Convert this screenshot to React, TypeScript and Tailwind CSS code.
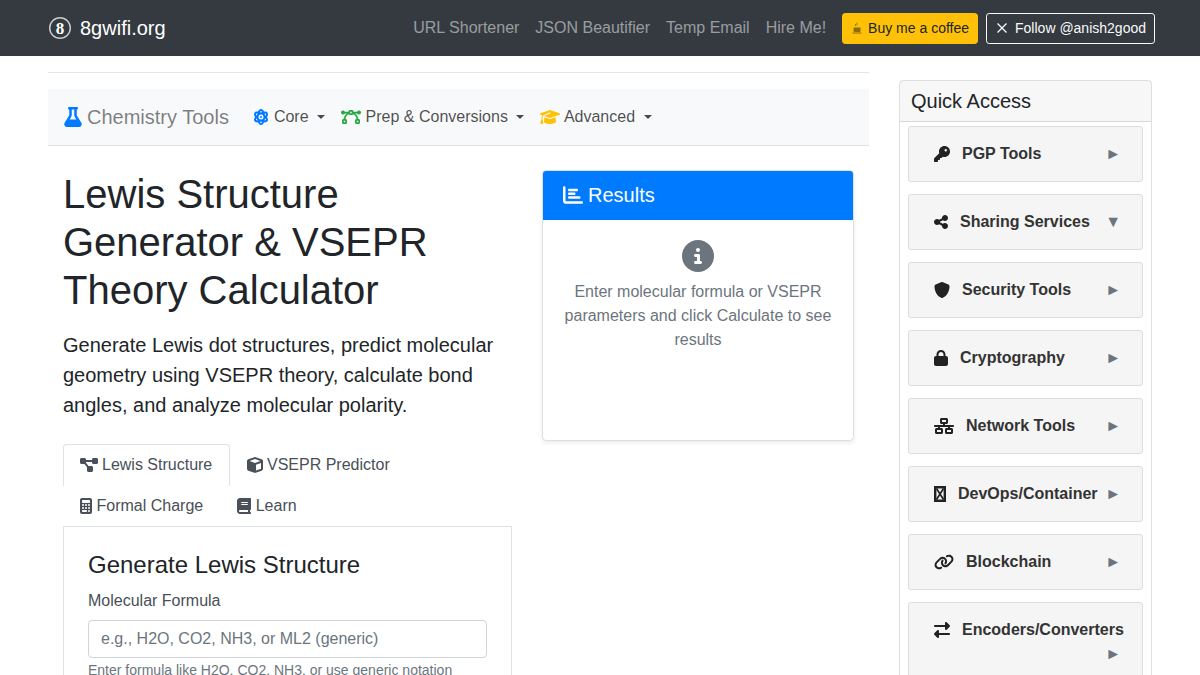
import React from "react";
import {
  FaFlask, FaAtom, FaBezierCurve, FaGraduationCap, FaDiagramProject, FaCube, FaCalculator, FaBook,
  FaChartBar, FaCircleInfo, FaKey, FaShareNodes, FaShield, FaLock, FaNetworkWired, FaLink, FaRightLeft,
} from "react-icons/fa6";

function BoxHourglass() {
  return (
    <svg viewBox="0 0 12 16" className="w-3 h-4">
      <path d="M1.2 1.3h9.6v13.4H1.2z" fill="none" stroke="currentColor" strokeWidth="2.4" />
      <path d="M2.5 2.5l7 11M9.5 2.5l-7 11" stroke="currentColor" strokeWidth="1.7" />
    </svg>
  );
}

const sidebar: { label: string; icon: React.ReactNode; arrow?: string; wrap?: boolean }[] = [
  { label: "PGP Tools", icon: <FaKey /> },
  { label: "Sharing Services", icon: <FaShareNodes className="w-[14px]" />, arrow: "▼" },
  { label: "Security Tools", icon: <FaShield /> },
  { label: "Cryptography", icon: <FaLock className="w-[14px]" /> },
  { label: "Network Tools", icon: <FaNetworkWired className="w-5" /> },
  { label: "DevOps/Container", icon: <BoxHourglass /> },
  { label: "Blockchain", icon: <FaLink className="w-5" /> },
  { label: "Encoders/Converters", icon: <FaRightLeft />, wrap: true },
];

function Caret() {
  return <span className="inline-block ml-[8px] w-0 h-0 border-t-[4.8px] border-t-current border-x-[4.8px] border-x-transparent" />;
}

export default function App() {
  return (
    <div className="h-[675px] overflow-hidden bg-white text-[#212529] text-base font-['Liberation_Sans',Arial,sans-serif]">
      <nav className="h-14 bg-[#343a40] flex items-center pl-12 pr-[45px]">
        <svg viewBox="0 0 24 24" className="w-6 h-6 mr-[8px] shrink-0">
          <circle cx="12" cy="12" r="10.3" fill="none" stroke="#c9cacc" strokeWidth="1.5" />
          <text x="12" y="18" textAnchor="middle" fontSize="17" fontWeight="700" fill="#fff" fontFamily="'Liberation Serif',serif">8</text>
        </svg>
        <span className="text-[20px] text-white">8gwifi.org</span>
        <div className="ml-auto flex items-center">
          <a className="text-[rgba(255,255,255,0.5)] px-2">URL Shortener</a>
          <a className="text-[rgba(255,255,255,0.5)] px-2">JSON Beautifier</a>
          <a className="text-[rgba(255,255,255,0.5)] px-2">Temp Email</a>
          <a className="text-[rgba(255,255,255,0.5)] px-2">Hire Me!</a>
          <a className="ml-2 h-[31px] flex items-center px-2 rounded-[3.2px] bg-[#ffc107] border border-[#ffc107] text-[14px] text-[#212529] whitespace-nowrap">
            <svg viewBox="0 0 12 12" className="w-3 h-3 mr-[5px]">
              <path d="M6 0.5v3M4.5 2v2" stroke="#8a6d10" strokeWidth="0.8" fill="none" />
              <path d="M2.5 5.5h7v3.5a1 1 0 0 1-1 1h-5a1 1 0 0 1-1-1z" fill="#8a6d10" />
              <path d="M1.5 11h9" stroke="#8a6d10" strokeWidth="1" />
            </svg>
            Buy me a coffee
          </a>
          <a className="ml-2 h-[31px] flex items-center px-2 rounded-[3.2px] border border-[#f8f9fa] text-[14px] text-[#f8f9fa] whitespace-nowrap">
            <svg viewBox="0 0 14 14" className="w-[14px] h-[14px] mr-[6px]"><path d="M2.5 2.5l9 9M11.5 2.5l-9 9" stroke="#f8f9fa" strokeWidth="1.3" /></svg>
            Follow @anish2good
          </a>
        </div>
      </nav>

      <div className="flex px-12 items-start">
        <main className="w-[821px] shrink-0">
          <hr className="mt-4 mb-4 border-t border-[#e5e5e5]" />
          <div className="h-[57px] bg-[#f8f9fa] border-b border-[#dee2e6] flex items-center pl-4">
            <FaFlask className="w-[18px] h-5 text-[#007bff]" />
            <span className="ml-[5px] text-[20px] leading-[30px] text-[rgba(0,0,0,0.5)] -mt-px">Chemistry Tools</span>
            <div className="flex items-center text-[rgba(0,0,0,0.7)] ml-6 -mt-[1px]">
              <span className="pr-4 flex items-center"><FaAtom className="w-4 h-4 text-[#007bff] mr-[5px]" />Core<Caret /></span>
              <span className="pr-4 flex items-center"><FaBezierCurve className="w-5 h-4 text-[#28a745] mr-[5px]" />Prep &amp; Conversions<Caret /></span>
              <span className="flex items-center"><FaGraduationCap className="w-5 h-4 text-[#ffc107] mr-[4px]" />Advanced<span className="ml-px flex items-center"><Caret /></span></span>
            </div>
          </div>
          <div className="flex px-[15px] mt-6 gap-[30px] items-start">
            <section className="w-[449px] shrink-0">
              <h1 className="text-[40px] leading-[48px] font-normal">Lewis Structure Generator &amp; VSEPR Theory Calculator</h1>
              <p className="mt-[16px] text-[20px] leading-[30px] font-light">Generate Lewis dot structures, predict molecular geometry using VSEPR theory, calculate bond angles, and analyze molecular polarity.</p>
              <div className="mt-[24px] text-[#495057]">
                <div className="flex h-[41px]">
                  <div className="w-[167px] h-[42px] pl-[16px] pb-[2px] flex items-center border border-b-0 border-[#dee2e6] rounded-t-[4px] bg-white z-10">
                    <FaDiagramProject className="w-[18px] h-4 mr-[4px] shrink-0" />Lewis Structure
                  </div>
                  <div className="pl-[17px] flex items-center"><FaCube className="w-4 h-4 mr-[4px]" />VSEPR Predictor</div>
                </div>
                <div className="flex h-[41px] items-center pl-[17px]">
                  <FaCalculator className="w-3 h-4 mr-[4.5px]" />Formal Charge
                  <FaBook className="w-[14px] h-4 ml-[34px] mr-[4.5px]" />Learn
                </div>
                <div className="border border-[#dee2e6] px-6 pt-6 pb-6">
                  <h4 className="text-[24px] leading-[28px] text-[#212529]">Generate Lewis Structure</h4>
                  <label className="block mt-[10px] leading-6">Molecular Formula</label>
                  <input readOnly placeholder="e.g., H2O, CO2, NH3, or ML2 (generic)" className="mt-[7px] w-full h-[38px] px-3 border border-[#ced4da] rounded-[4px] placeholder:text-[#6c757d] outline-none" />
                  <p className="mt-[2px] text-[14px] leading-[21px] text-[#6c757d]">Enter formula like H2O, CO2, NH3, or use generic notation</p>
                </div>
              </div>
            </section>
            <aside className="w-[312px] h-[270.5px] shrink-0 border border-[rgba(0,0,0,0.125)] rounded-[4px] shadow-[0_2px_4px_rgba(0,0,0,0.075)] overflow-hidden">
              <div className="h-[49px] bg-[#007bff] text-white flex items-center pl-5 pb-[1px] text-[20px]">
                <FaChartBar className="w-5 h-5 mr-[5px]" />Results
              </div>
              <div className="flex flex-col items-center pt-5 px-5 text-center text-[#6c757d] leading-6">
                <FaCircleInfo className="w-8 h-8" />
                <p className="mt-[8px]">Enter molecular formula or VSEPR parameters and click Calculate to see results</p>
              </div>
            </aside>
          </div>
        </main>

        <aside className="w-[253px] ml-[30px] mt-6 shrink-0 border border-[rgba(0,0,0,0.125)] rounded-[4px]">
          <div className="h-[41px] bg-[rgba(0,0,0,0.03)] border-b border-[rgba(0,0,0,0.125)] px-[11px] flex items-center text-[20px]">Quick Access</div>
          <div className="px-2 pt-1 flex flex-col gap-3">
            {sidebar.map((s) => (
              <div key={s.label} className={`bg-[#f5f5f5] border border-[#ddd] rounded-[3px] shrink-0 pl-[25px] pr-[21px] ${s.wrap ? "h-[90px] pt-[15px]" : "h-[56px] flex items-center"}`}>
                <div className={`flex items-center w-full font-bold text-[#333] whitespace-nowrap ${s.wrap ? "" : "-mt-[1px]"}`}>
                  <span className="text-[#222] text-base flex items-center">{s.icon}</span>
                  <span className="ml-[12px]">{s.label}</span>
                  {!s.wrap && <span className="ml-auto text-[16px] font-normal text-[#6c757d]">{s.arrow ?? "►"}</span>}
                </div>
                {s.wrap && <div className="text-[16px] text-[#6c757d] text-right">►</div>}
              </div>
            ))}
          </div>
        </aside>
      </div>
    </div>
  );
}
